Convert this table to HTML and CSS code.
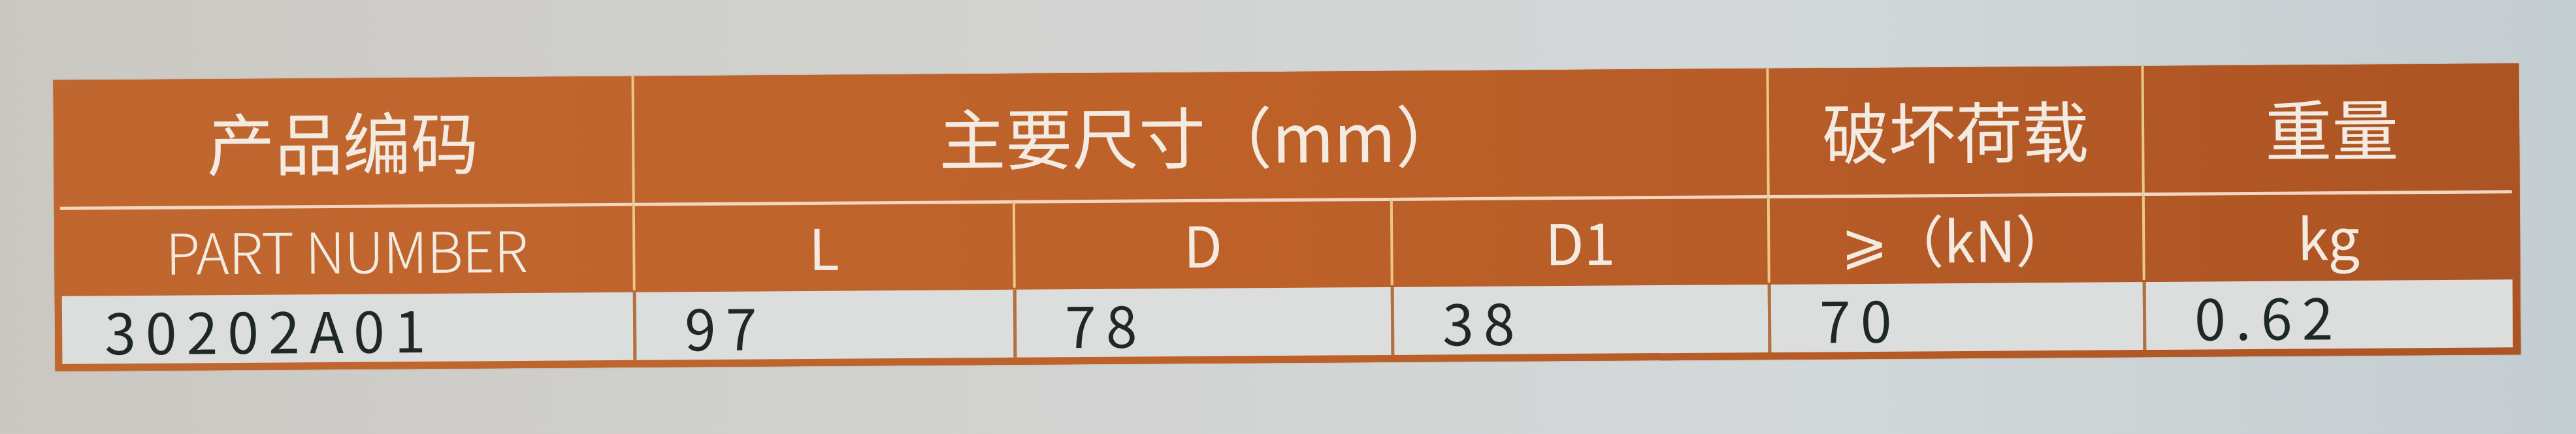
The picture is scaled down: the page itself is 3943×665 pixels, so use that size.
FILE: index.html
```html
<!DOCTYPE html>
<html lang="zh-CN">
<head>
<meta charset="utf-8">
<title>30202A01</title>
<link rel="stylesheet" href="styles.css">
</head>
<body>
<main class="page">
  <div class="spec">
    <div class="cell h1 first">产品编码</div>
    <div class="cell h1 span3">主要尺寸（mm）</div>
    <div class="cell h1">破坏荷载</div>
    <div class="cell h1 last">重量</div>

    <div class="cell h2 first light">PART NUMBER</div>
    <div class="cell h2">L</div>
    <div class="cell h2">D</div>
    <div class="cell h2">D1</div>
    <div class="cell h2">⩾（kN）</div>
    <div class="cell h2 last">kg</div>

    <div class="cell data first"><span class="val">30202A01</span></div>
    <div class="cell data"><span class="val">97</span></div>
    <div class="cell data"><span class="val">78</span></div>
    <div class="cell data"><span class="val">38</span></div>
    <div class="cell data"><span class="val">70</span></div>
    <div class="cell data last"><span class="val">0.62</span></div>
  </div>
</main>
</body>
</html>
```

FILE: styles.css
```css
html, body {
  margin: 0;
  padding: 0;
}

body {
  width: 3943px;
  height: 665px;
  overflow: hidden;
  background: linear-gradient(90deg, #cbc8c2 0%, #d2d3d1 40%, #d3d8d9 70%, #c4cdd1 100%);
  font-family: "Noto Sans CJK SC", "Noto Sans", sans-serif;
}

.page {
  padding: 110px 0 0 83px;
}

.spec {
  display: grid;
  grid-template-columns: 885px 582px 578px 577px 574px 578px;
  grid-template-rows: 194px 134px 118px;
  width: 3774px;
  background: #bb602a;
  background-image: linear-gradient(90deg, #c0672f 0%, #bd6129 50%, #ad5424 100%);
  transform: rotate(-0.39deg);
  box-shadow: 0 0 2px rgba(160, 80, 30, 0.6);
}

.cell {
  display: flex;
  align-items: center;
  justify-content: center;
  color: #f3ebe1;
  border-left: 4px solid #e9c887;
  box-sizing: border-box;
}

.cell.first {
  border-left: none;
}

.h1 {
  font-size: 102px;
  font-weight: 400;
  letter-spacing: 0;
  padding-bottom: 6px;
}

.h1.first {
  font-size: 104px;
}

.span3 {
  grid-column: span 3;
}

.h2 {
  font-size: 86px;
  font-weight: 400;
  border-top: 5px solid #f2d6c0;
  padding-bottom: 4px;
}

.h2.first {
  margin-left: 9px;
}

.h2.last {
  margin-right: 12px;
}

.light {
  font-weight: 300;
  letter-spacing: -1px;
}

.data {
  justify-content: flex-start;
  border-left: 5px solid #b4703e;
  background: #dcdddd;
  margin: 3px 0 11px 0;
  padding-left: 74px;
  color: #1f2829;
  font-size: 86px;
  font-weight: 400;
}

.data.first {
  border-left: none;
  margin-left: 11px;
  padding-left: 65px;
}

.data.last {
  margin-right: 12px;
}

.val {
  letter-spacing: 15px;
  line-height: 1;
  padding-top: 2px;
}
```
